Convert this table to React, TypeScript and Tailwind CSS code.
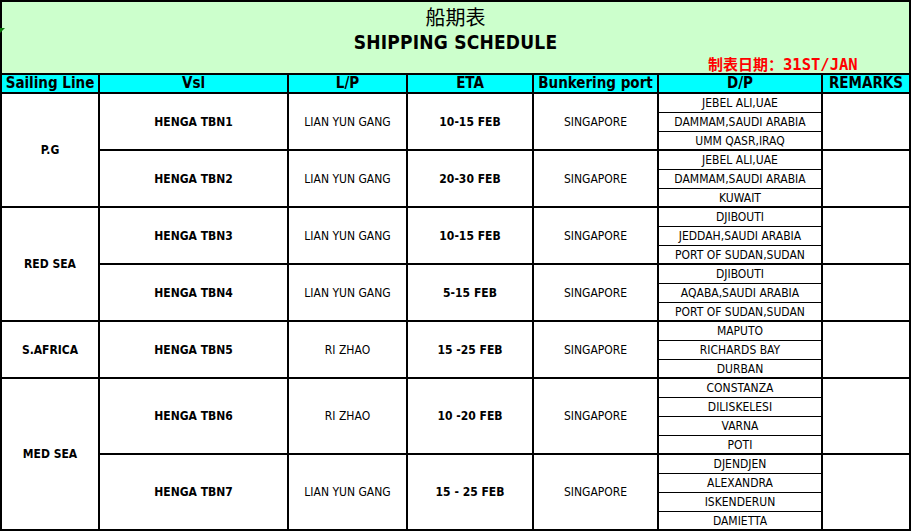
import React from "react";

type Vessel = { vsl: string; lp: string; eta: string; dp: string[] };
type Group = { line: string; vessels: Vessel[] };

const groups: Group[] = [
  {
    line: "P.G",
    vessels: [
      { vsl: "HENGA TBN1", lp: "LIAN YUN GANG", eta: "10-15 FEB", dp: ["JEBEL ALI,UAE", "DAMMAM,SAUDI ARABIA", "UMM QASR,IRAQ"] },
      { vsl: "HENGA TBN2", lp: "LIAN YUN GANG", eta: "20-30 FEB", dp: ["JEBEL ALI,UAE", "DAMMAM,SAUDI ARABIA", "KUWAIT"] },
    ],
  },
  {
    line: "RED SEA",
    vessels: [
      { vsl: "HENGA TBN3", lp: "LIAN YUN GANG", eta: "10-15 FEB", dp: ["DJIBOUTI", "JEDDAH,SAUDI ARABIA", "PORT OF SUDAN,SUDAN"] },
      { vsl: "HENGA TBN4", lp: "LIAN YUN GANG", eta: "5-15 FEB", dp: ["DJIBOUTI", "AQABA,SAUDI ARABIA", "PORT OF SUDAN,SUDAN"] },
    ],
  },
  {
    line: "S.AFRICA",
    vessels: [{ vsl: "HENGA TBN5", lp: "RI ZHAO", eta: "15 -25 FEB", dp: ["MAPUTO", "RICHARDS BAY", "DURBAN"] }],
  },
  {
    line: "MED SEA",
    vessels: [
      { vsl: "HENGA TBN6", lp: "RI ZHAO", eta: "10 -20 FEB", dp: ["CONSTANZA", "DILISKELESI", "VARNA", "POTI"] },
      { vsl: "HENGA TBN7", lp: "LIAN YUN GANG", eta: "15 - 25 FEB", dp: ["DJENDJEN", "ALEXANDRA", "ISKENDERUN", "DAMIETTA"] },
    ],
  },
];

const spanClass: Record<number, string> = {
  1: "row-span-1",
  3: "row-span-3",
  4: "row-span-4",
  6: "row-span-6",
  8: "row-span-8",
};

const cell = "flex items-center justify-center border-r-2 border-b-2 border-black overflow-hidden whitespace-nowrap";

export default function App() {
  const font = { fontFamily: '"DejaVu Sans Condensed", "DejaVu Sans", Tahoma, sans-serif' };
  return (
    <div className="relative w-[912px] h-[531px] bg-white overflow-hidden" style={font}>
      <div className="grid grid-cols-[98px_189px_119px_126px_125px_164px_88px] grid-rows-[73px_19px] auto-rows-[19px] w-[911px] border-l-2 border-t-2 border-black text-black">
        {/* Title */}
        <div className="col-span-7 relative flex flex-col items-center border-r-2 border-b-2 border-black bg-[#ccffcc]">
          <div className="mt-[2px] text-[20px] leading-[25px]" style={{ fontFamily: '"Noto Sans CJK SC", sans-serif' }}>
            船期表
          </div>
          <div className="mt-[2px] text-[19px] leading-[22px] font-bold tracking-[0.2px]">SHIPPING SCHEDULE</div>
          <div className="absolute left-[706px] top-[52px] flex items-baseline font-bold text-[#ff0000]">
            <span className="text-[15px] leading-[19px]" style={{ fontFamily: '"Noto Sans CJK SC", sans-serif' }}>
              制表日期：
            </span>
            <span className="text-[15.5px] leading-[19px]" style={{ fontFamily: '"DejaVu Sans Mono", monospace' }}>
              31ST/JAN
            </span>
          </div>
        </div>

        {/* Header */}
        {["Sailing Line", "Vsl", "L/P", "ETA", "Bunkering port", "D/P", "REMARKS"].map((h) => (
          <div key={h} className={`${cell} bg-[#00ffff] text-[15px] font-bold leading-none`}>
            {h}
          </div>
        ))}

        {groups.map((g) => {
          const total = g.vessels.reduce((s, v) => s + v.dp.length, 0);
          return (
            <React.Fragment key={g.line}>
              <div className={`${cell} ${spanClass[total]} bg-white text-[12px] font-bold`}>{g.line}</div>
              {g.vessels.map((v, vi) => {
                const n = v.dp.length;
                const sp = spanClass[n];
                return (
                  <React.Fragment key={vi}>
                    <div className={`${cell} ${sp} bg-white text-[12px] font-bold`}>{v.vsl}</div>
                    <div className={`${cell} ${sp} bg-white text-[12px]`}>{v.lp}</div>
                    <div className={`${cell} ${sp} bg-white text-[12px] font-bold`}>{v.eta}</div>
                    <div className={`${cell} ${sp} bg-white text-[12px]`}>SINGAPORE</div>
                    <div className="flex items-center justify-center border-r-2 border-b border-black bg-white text-[12px] whitespace-nowrap">
                      {v.dp[0]}
                    </div>
                    <div className={`${cell} ${sp} bg-white`}></div>
                    {v.dp.slice(1).map((d, di) => (
                      <div
                        key={di}
                        className={`flex items-center justify-center border-r-2 border-black bg-white text-[12px] whitespace-nowrap ${
                          di === n - 2 ? "border-b-2" : "border-b"
                        }`}
                      >
                        {d}
                      </div>
                    ))}
                  </React.Fragment>
                );
              })}
            </React.Fragment>
          );
        })}
      </div>
      <svg className="absolute left-0 top-[28px]" width="6" height="6" viewBox="0 0 6 6">
        <polygon points="0,0 5,0 0,5" fill="#0a7a0a" />
      </svg>
    </div>
  );
}
